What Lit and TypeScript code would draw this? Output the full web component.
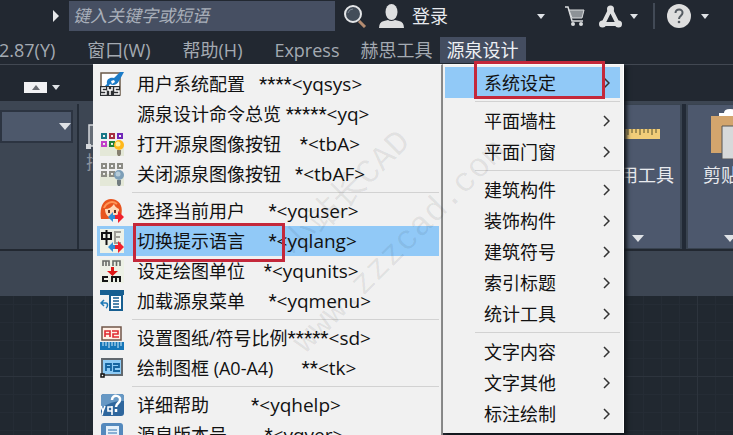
import { LitElement, html, css, svg, nothing } from "lit";
import { customElement } from "lit/decorators.js";
import { classMap } from "lit/directives/class-map.js";

interface Command {
  icon?: string;
  label: string;
  gap?: number;
  stars: string;
  command: string;
  active?: boolean;
}

const COMMAND_GROUPS: Command[][] = [
  [
    { icon: "sys", label: "用户系统配置", gap: 3, stars: "****", command: "<yqsys>" },
    { label: "源泉设计命令总览", gap: 1, stars: "*****", command: "<yq>" },
    { icon: "on", label: "打开源泉图像按钮", gap: 4, stars: "*", command: "<tbA>" },
    { icon: "off", label: "关闭源泉图像按钮", gap: 3, stars: "*", command: "<tbAF>" },
  ],
  [
    { icon: "user", label: "选择当前用户", gap: 5, stars: "*", command: "<yquser>" },
    { icon: "lang", label: "切换提示语言", gap: 5, stars: "*", command: "<yqlang>", active: true },
    { icon: "units", label: "设定绘图单位", gap: 4, stars: "*", command: "<yqunits>" },
    { icon: "load", label: "加载源泉菜单", gap: 5, stars: "*", command: "<yqmenu>" },
  ],
  [
    { icon: "scale", label: "设置图纸/符号比例", stars: "*****", command: "<sd>" },
    { icon: "frame", label: "绘制图框 (A0-A4)", gap: 6, stars: "**", command: "<tk>" },
  ],
  [
    { icon: "help", label: "详细帮助", gap: 9, stars: "*", command: "<yqhelp>" },
    { icon: "about", label: "源泉版本号", gap: 8, stars: "*", command: "<yqver>" },
  ],
];

const CATEGORY_GROUPS: string[][] = [
  ["系统设定"],
  ["平面墙柱", "平面门窗"],
  ["建筑构件", "装饰构件", "建筑符号", "索引标题", "统计工具"],
  ["文字内容", "文字其他", "标注绘制"],
];

const swap = svg`
  <path d="M8 18l5-5v3h3v4h-3v3z" fill="#2f8fd8"/>
  <path d="M24 18l-6-6v4h-3v4h3v4z" fill="#f0202c"/>`;

const grid = (colors: string[]) => colors.map((c, i) => svg`
  <rect x=${2 + (i % 3) * 8} y=${2 + Math.floor(i / 3) * 8} width="4" height="4" fill="none" stroke=${c} stroke-width="2"/>`);

const ICONS: Record<string, unknown> = {
  sys: svg`
    <rect x="1" y="1" width="19" height="22" fill="#fff" stroke="#6b5a48" stroke-width="1.5"/>
    <path d="M7 12c-1-5 3-7 7-6l6-6h4l-5 9c-2 4-6 5-9 3l-2 3-3-1z" fill="#1c7cc8"/>
    <path d="M11 9l3-1 1 2-3 2z" fill="#fff"/>
    <rect x="0" y="14" width="20" height="10" fill="#2c2f33"/>
    <path d="M6 16H2v3h4v3H1M8 15v3h4v-3M10 18v5M19 16h-4v3h4v3h-5" fill="none" stroke="#fff" stroke-width="1.5"/>`,
  on: svg`
    <rect x="0" y="12" width="24" height="12" fill="#e4e8d8"/>
    ${grid(["#187888", "#a83040", "#7028b8", "#c040c8", "#208038"])}
    <circle cx="19" cy="13" r="5" fill="#ffb81c"/><circle cx="18" cy="12" r="2.5" fill="#fff09a"/>
    <path d="M17 18h4v4l-1 2h-2l-1-2z" fill="#857f70"/>`,
  off: svg`
    <rect x="0" y="12" width="24" height="12" fill="#e4e8d8"/>
    ${grid(["#8b8b84", "#8b8b84", "#8b8b84", "#8b8b84", "#8b8b84"])}
    <circle cx="19" cy="13" r="5" fill="#7d9fb8"/><circle cx="18" cy="12" r="2.5" fill="#b5cbd8"/>
    <path d="M17 18h4v4l-1 2h-2l-1-2z" fill="#727c80"/>`,
  user: svg`
    <path d="M1 20C-1 7 4 0 11 0s13 6 10 17l-4 2-10 1z" fill="#e8541e"/>
    <path d="M5 10c4 0 7-2 9-5 1 3 3 4 5 5 0 6-4 9-7 9s-7-3-7-9z" fill="#ffd9b8"/>
    <path d="M4 9C6 4 12 1 17 5" fill="none" stroke="#ff9556" stroke-width="2"/>
    <rect x="8" y="11" width="2" height="3" fill="#643020"/><rect x="14" y="11" width="2" height="3" fill="#643020"/>
    ${swap}`,
  lang: svg`
    <rect x="0" y="0" width="24" height="24" fill="#edf1e6"/>
    <path d="M2 4h9v6H2zM6.500 1v15" fill="none" stroke="#111" stroke-width="2"/>
    <path d="M21 3h-6v11h6M15 8h5" fill="none" stroke="#a0a098" stroke-width="2"/>
    ${swap}`,
  units: svg`
    <rect x="0" y="0" width="24" height="24" fill="#edf1e6"/>
    <path d="M3 7V2h6v5M6 2v5M13 7V2h7v5M16.500 2v5" fill="none" stroke="#666a66" stroke-width="1.600"/>
    <path d="M11 8h3v4h4l-5.500 5L7 12h4z" fill="#e01818"/>
    <path d="M8 18H3v4h5M12 23v-5h8v5M16 18v5" fill="none" stroke="#161616" stroke-width="2"/>`,
  load: svg`
    <rect x="0" y="1" width="24" height="5" fill="#175f91"/>
    <path d="M10 6h12v15H10z" fill="#fff" stroke="#175f91" stroke-width="2"/>
    <path d="M13 9h6M13 12h6M13 15h6M13 18h6" stroke="#175f91" stroke-width="1.500"/>
    <path d="M4 11l-3 3 3 3M1 14h5c2 0 2 4 0 5" fill="none" stroke="#1e79b6" stroke-width="1.500"/>`,
  scale: svg`
    <rect x="2" y="1" width="19" height="13" fill="#fff0e6" stroke="#705548" stroke-width="1.500"/>
    <path d="M5 11V5h5v6M5 8h5M12 5h6v3h-5v3h6" fill="none" stroke="#e02830" stroke-width="1.600"/>
    <rect x="0" y="16" width="24" height="8" fill="#1676b8"/>
    <path d="M3 16v4M6 16v4M9 16v6M12 16v4M15 16v4M18 16v6M21 16v4" stroke="#d9effa" stroke-width="1"/>`,
  frame: svg`
    <rect x="2" y="3" width="20" height="16" fill="#8ecbf5" stroke="#61686e" stroke-width="2"/>
    <path d="M6 15V8h5v7M6 11h5M13 8h6v3h-5v4h6" fill="none" stroke="#1464a0" stroke-width="1.800"/>
    <rect x="1" y="18" width="3" height="3" fill="#fff" stroke="#111" stroke-width="1.500"/>`,
  help: svg`
    <rect x="1" y="1" width="23" height="22" rx="3" fill="#2e669d"/>
    <path d="M1 4q0-3 3-3h17q3 0 3 3v4Q13 7 1 15z" fill="#6798c4"/>
    <path d="M12 7c0-6 9-5 8 0 0 3-4 3-4 7M16 16v3" fill="none" stroke="#fff" stroke-width="2.500"/>
    <path d="M1 13l2 5 2-5M3 18l-1 4M12 14H8v4h4M12 13v9" fill="none" stroke="#fff" stroke-width="1.600"/>`,
  about: svg`
    <rect x="1" y="0" width="22" height="24" rx="3" fill="#5489bd"/>
    <rect x="6" y="3" width="13" height="16" fill="#e5f1fb"/>
    <path d="M8 7h9M8 10h9M8 13h9" stroke="#6b9bc8" stroke-width="1.500"/>`,
};

@customElement("app-root")
export class AppRoot extends LitElement {
  static styles = css`
    :host {
      display: flex;
      flex-direction: column;
      height: 100vh;
      overflow: hidden;
      background: #212830;
      color: #e8eaee;
      font: 18px/24px "Open Sans", "Noto Sans CJK SC", sans-serif;
    }
    *, *::after { box-sizing: border-box; }
    button, input {
      font: inherit;
      color: inherit;
      border: 0;
      border-radius: 0;
      background: none;
      padding: 0;
      margin: 0;
    }
    svg { display: block; flex: none; }
    .titlebar {
      display: flex;
      align-items: center;
      height: 32px;
      flex: none;
      padding: 0 24px 0 52px;
      background: #222831;
    }
    .search {
      width: 266px;
      height: 30px;
      margin: 0 9px;
      padding: 0 4px 2px;
      background: #464f62;
      font-size: 17px;
      font-style: italic;
    }
    .search::placeholder { color: #a9afba; opacity: 1; }
    .login { display: flex; align-items: center; gap: 8px; margin-left: 12px; }
    .tools { display: flex; align-items: center; margin-left: auto; }
    .tools .cart { margin-left: 20px; }
    .tools .share { margin: 0 8px 0 14px; }
    .tools .rule { width: 2px; height: 26px; margin: 0 12px 0 15px; background: #424a56; }
    .tools .about { margin-right: 10px; }
    .menubar {
      position: relative;
      z-index: 1;
      display: flex;
      align-items: center;
      height: 33px;
      flex: none;
      padding-top: 4px;
      background: #222831;
      border-bottom: 1px solid #424852;
      color: #a4aab2;
    }
    .menubar .top { height: 26px; padding: 0 7px; white-space: nowrap; }
    .menubar .spaced { margin-right: 18px; }
    .menubar .near { margin-right: 7px; }
    .menubar .clipped { margin-left: -8px; }
    .menubar .open { background: #444d60; color: #eef0f4; }
    .popup {
      position: absolute;
      top: 32px;
      left: 93px;
      display: flex;
      align-items: flex-start;
      color: #111;
    }
    .menu { background: #f1f1f1; border-top: 1px solid #fafafa; }
    .commands {
      width: 350px;
      padding: 4px 2px 4px 4px;
      border-right: 2px solid #8c8c8c;
    }
    .categories {
      width: 181px;
      padding: 2px 3px 4px 2px;
      border-right: 1px solid #fff;
      box-shadow: 3px 3px 4px #12161b;
    }
    .item {
      position: relative;
      display: flex;
      align-items: center;
      width: 100%;
      text-align: left;
      white-space: pre;
    }
    .commands .item { height: 30px; padding-left: 3px; }
    .categories .item { height: 31px; padding: 0 10px 0 39px; justify-content: space-between; }
    .slot { width: 24px; height: 24px; margin-right: 13px; flex: none; }
    .stars { font-family: Roboto, sans-serif; font-size: 19px; }
    .command { font-size: 19px; }
    .active { background: #91c9f7; }
    .divider { height: 1px; margin: 3px 0; border: 0; background: #d2d2d2; }
    .commands .divider { margin-left: 35px; }
    .categories .divider { margin-left: 30px; }
    .mark::after {
      content: "";
      position: absolute;
      border: 3px solid #c4283a;
    }
    .commands .mark::after { left: 36px; top: -3px; width: 152px; height: 39px; }
    .categories .mark::after { left: 29px; top: -6px; width: 131px; height: 38px; }
    .watermark {
      position: absolute;
      left: 232px;
      top: 162px;
      color: rgba(0, 0, 0, 0.07);
      font: 34px/74px "Liberation Mono", "Noto Sans CJK SC", monospace;
      white-space: pre;
      transform: rotate(-45deg);
      transform-origin: 0 100%;
      pointer-events: none;
    }
    .tabs {
      display: flex;
      align-items: center;
      gap: 5px;
      height: 36px;
      flex: none;
      padding: 8px 0 0 24px;
      background: #222831;
    }
    .collapse { display: grid; place-items: center; width: 23px; height: 11px; background: #f2f2f4; }
    .ribbon {
      display: flex;
      height: 195px;
      flex: none;
      padding: 3px 0 46px;
      overflow: hidden;
      background: linear-gradient(#222831, #222831) 0 148px / 100% 2px no-repeat #3d4653;
    }
    .props { width: 79px; height: 145px; padding-top: 6px; border-right: 2px solid #252d38; }
    .combo {
      display: flex;
      align-items: center;
      justify-content: flex-end;
      width: 73px;
      height: 33px;
      padding-right: 0;
      border: 2px solid #2c3441;
      background: #4d586b;
    }
    .insert { padding: 20px 0 0 7px; color: #8c939d; }
    .panels { display: flex; gap: 4px; height: 145px; margin: 0 -41px 0 auto; background: #222a36; }
    .panel {
      display: flex;
      flex-direction: column;
      align-items: center;
      width: 88px;
      border: 1px solid #394350;
      border-width: 1px 2px;
      background: #4d586d;
      white-space: nowrap;
    }
    .pic { display: grid; place-items: center; height: 58px; }
    .panel .arrow { margin-top: 48px; }
    .canvas {
      flex: 1;
      background:
        repeating-linear-gradient(90deg, #2d343d 0 1px, transparent 1px 90px) 67px 0,
        repeating-linear-gradient(#2d343d 0 1px, transparent 1px 90px) 0 80px,
        repeating-linear-gradient(90deg, #252c35 0 1px, transparent 1px 18px) 67px 0,
        repeating-linear-gradient(#252c35 0 1px, transparent 1px 18px) 0 80px,
        #212830;
      background-size: 90px 90px;
    }
  `;

  private arrow(width = 8, height = 5, fill = "#dfe2e6") {
    return html`<svg class="arrow" width=${width} height=${height} viewBox="0 0 8 5" preserveAspectRatio="none" aria-hidden="true">
      <path d="M0 0h8L4 5z" fill=${fill} /></svg>`;
  }

  private renderCommand(c: Command) {
    return html`<button role="menuitem" class=${classMap({ item: true, active: !!c.active, mark: !!c.active })}>
      <span class="slot">${c.icon
        ? html`<svg width="24" height="24" viewBox="0 0 24 24" aria-hidden="true">${ICONS[c.icon]}</svg>`
        : nothing}</span><span>${c.label}${" ".repeat(c.gap ?? 0)}</span><span class="stars">${c.stars}</span><span class="command">${c.command}</span></button>`;
  }

  private renderCategory(name: string, first: boolean) {
    return html`<button role="menuitem" aria-haspopup="menu" class=${classMap({ item: true, active: first, mark: first })}><span>${name}</span><svg width="7" height="12" viewBox="0 0 7 12" aria-hidden="true"><path d="M1 1l5 5-5 5" fill="none" stroke="#333" stroke-width="1.500" /></svg></button>`;
  }

  private renderTitlebar() {
    return html`<header class="titlebar">
      <svg width="8" height="12" viewBox="0 0 8 12" aria-hidden="true"><path d="M1 0l6 6-6 6z" fill="#e6e8ea" /></svg>
      <input class="search" type="search" aria-label="搜索" placeholder="键入关键字或短语" />
      <svg width="23" height="24" viewBox="0 0 23 24" aria-hidden="true">
        <path d="M15 17l6 6" stroke="#b58c70" stroke-width="3" />
        <circle cx="9" cy="10" r="8" fill="#434d59" stroke="#e4e6e8" stroke-width="2" />
        <path d="M4 9q1-4 5-4" fill="none" stroke="#7b8691" />
      </svg>
      <button class="login">
        <svg width="25" height="24" viewBox="0 0 25 24" aria-hidden="true">
          <ellipse cx="12.500" cy="8" rx="6" ry="8" fill="#dedfe0" />
          <path d="M0 24q0-6 5-7l4-1q3 2 7 0l4 1q5 1 5 7z" fill="#dedfe0" />
        </svg>
        <span>登录</span>
      </button>
      <div class="tools">
        ${this.arrow()}
        <svg class="cart" width="20" height="21" viewBox="0 0 20 21" aria-hidden="true">
          <path d="M0 1h3l4 14h11" fill="none" stroke="#dadcde" stroke-width="1.500" />
          <path d="M4 4h15l-2 8H7z" fill="#8d9297" stroke="#dadcde" />
          <circle cx="8" cy="18" r="2" fill="#dadcde" /><circle cx="16" cy="18" r="2" fill="#dadcde" />
        </svg>
        <svg class="share" width="23" height="23" viewBox="0 0 23 23" aria-hidden="true">
          <path d="M11.500 4L4 19h15z" fill="none" stroke="#dfe0e1" stroke-width="4" stroke-linejoin="round" />
          <circle cx="11.500" cy="4" r="3.500" fill="#dfe0e1" /><circle cx="3.500" cy="19" r="3.500" fill="#dfe0e1" /><circle cx="19.500" cy="19" r="3.500" fill="#dfe0e1" />
        </svg>
        ${this.arrow()}
        <span class="rule"></span>
        <svg class="about" width="24" height="24" viewBox="0 0 24 24" aria-hidden="true">
          <circle cx="12" cy="12" r="12" fill="#dedede" />
          <path d="M8.500 9c0-5 7.500-4.500 7 0 0 2.500-3.500 3-3.500 6" fill="none" stroke="#555b62" stroke-width="2" />
          <circle cx="12" cy="18" r="1.300" fill="#555b62" />
        </svg>
        ${this.arrow()}
      </div>
    </header>`;
  }

  render() {
    return html`
      ${this.renderTitlebar()}
      <nav class="menubar">
        <button class="top spaced clipped">2.87(Y)</button>
        <button class="top spaced">窗口(W)</button>
        <button class="top spaced">帮助(H)</button>
        <button class="top near">Express</button>
        <button class="top">赫思工具</button>
        <button class="top open">源泉设计</button>
        <div class="popup">
          <div class="menu commands" role="menu">
            ${COMMAND_GROUPS.map((g, i) => html`${i ? html`<hr class="divider" />` : nothing}${g.map((c) => this.renderCommand(c))}`)}
          </div>
          <div class="menu categories" role="menu">
            ${CATEGORY_GROUPS.map((g, i) => html`${i ? html`<hr class="divider" />` : nothing}${g.map((n) => this.renderCategory(n, i === 0))}`)}
          </div>
          <div class="watermark" aria-hidden="true">   小站长CAD
www.zzzcad.com</div>
        </div>
      </nav>
      <div class="tabs">
        <button class="collapse" aria-label="最小化">
          <svg width="8" height="5" viewBox="0 0 8 5" aria-hidden="true"><path d="M0 5h8L4 0z" fill="#6b6e74" /></svg>
        </button>
        ${this.arrow()}
      </div>
      <section class="ribbon">
        <div class="props"><button class="combo" aria-label="图层">${this.arrow(12, 7)}</button></div>
        <div class="insert">
          <svg width="24" height="26" viewBox="0 0 24 26" aria-hidden="true">
            <path d="M3 1h20v21H3z" fill="#666d76" stroke="#d5d8db" stroke-width="1.500" />
            <rect x="0" y="20" width="5" height="5" fill="#d5d8db" />
          </svg>
          <span>插入</span>
        </div>
        <div class="panels">
          <div class="panel">
            <span class="pic"><svg width="44" height="10" viewBox="0 0 44 10" aria-hidden="true">
              <path d="M0 0h44v10H0z" fill="#f2cd79" />
              <path d="M4 0v4M8 0v4M12 0v6M16 0v4M20 0v4M24 0v6M28 0v4M32 0v4M36 0v6M40 0v4" stroke="#59532f" />
            </svg></span>
            <span>实用工具</span>
            ${this.arrow(12, 7)}
          </div>
          <div class="panel">
            <span class="pic"><svg width="38" height="50" viewBox="0 0 38 50" aria-hidden="true">
              <path d="M0 7h38v37H0z" fill="#d3a56d" />
              <path d="M8 7V4h5q0-4 6-4t6 4h5v3z" fill="#fff" />
              <path d="M11 17h27v33H11z" fill="#d7d9da" stroke="#555" />
            </svg></span>
            <span>剪贴板</span>
            ${this.arrow(12, 7)}
          </div>
        </div>
      </section>
      <main class="canvas"></main>
    `;
  }
}
